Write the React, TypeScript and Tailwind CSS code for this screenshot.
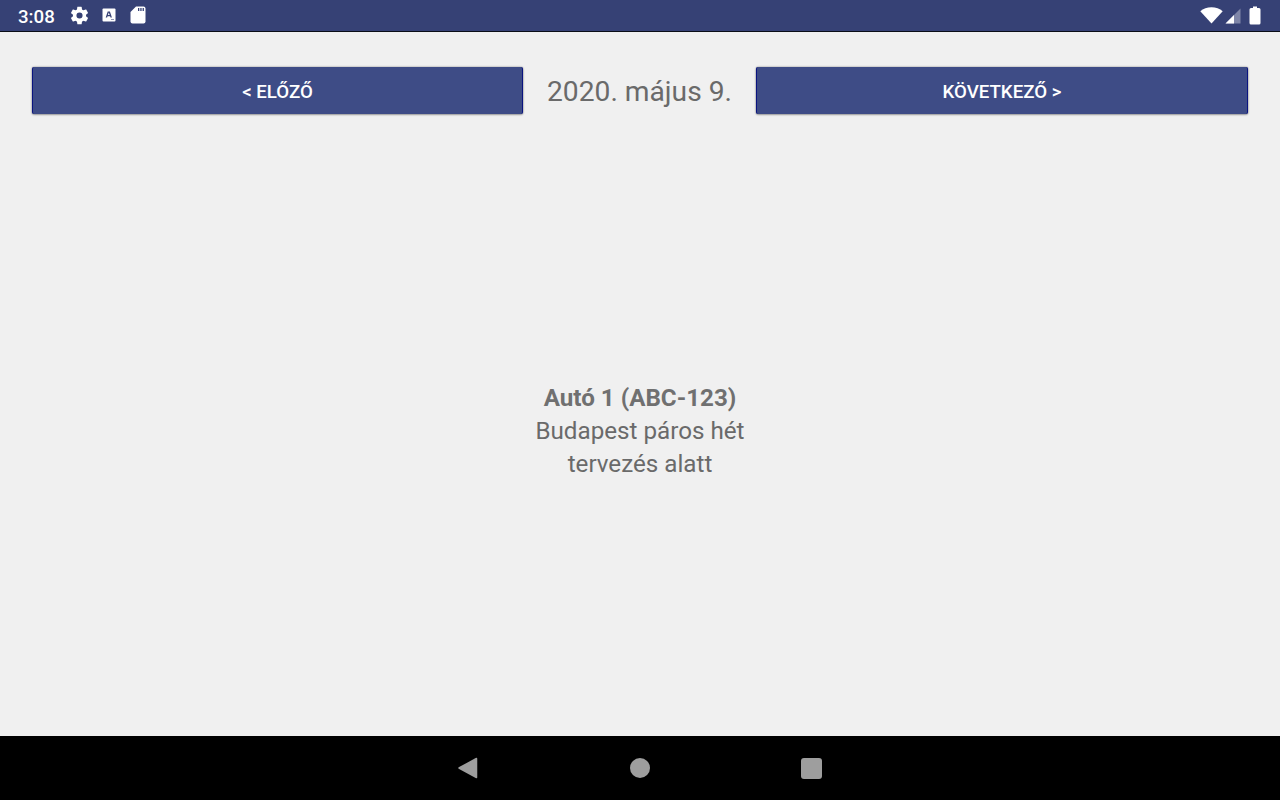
const font = { fontFamily: "Roboto, sans-serif" };

function StatusBar() {
  return (
    <div className="h-8 shrink-0 bg-[#364175] border-b border-black/80 flex items-center justify-between pl-[18px] pr-[19px] text-white">
      <div className="flex items-center">
        <span className="text-[18.67px] leading-none font-medium pt-[3px]">3:08</span>
        {/* settings */}
        <svg className="ml-[14px]" width="21" height="21" viewBox="0 0 24 24" fill="#fff">
          <path d="M19.43 12.98c.04-.32.07-.64.07-.98s-.03-.66-.07-.98l2.11-1.65c.19-.15.24-.42.12-.64l-2-3.46c-.12-.22-.39-.3-.61-.22l-2.49 1c-.52-.4-1.08-.73-1.69-.98l-.38-2.65A.49.49 0 0 0 14 2h-4c-.25 0-.46.18-.49.42l-.38 2.65c-.61.25-1.17.59-1.69.98l-2.49-1c-.23-.09-.49 0-.61.22l-2 3.46c-.13.22-.07.49.12.64l2.11 1.65c-.04.32-.07.65-.07.98s.03.66.07.98l-2.11 1.65c-.19.15-.24.42-.12.64l2 3.46c.12.22.39.3.61.22l2.49-1c.52.4 1.08.73 1.69.98l.38 2.65c.03.24.24.42.49.42h4c.25 0 .46-.18.49-.42l.38-2.65c.61-.25 1.17-.59 1.69-.98l2.49 1c.23.09.49 0 .61-.22l2-3.46c.12-.22.07-.49-.12-.64l-2.11-1.65zM12 15.5a3.5 3.5 0 1 1 0-7 3.5 3.5 0 0 1 0 7z" />
        </svg>
        {/* keyboard A notification */}
        <svg className="ml-[12px]" width="14" height="14" viewBox="0 0 14 14">
          <rect x="0.5" y="0.5" width="13" height="13" rx="1" fill="#fff" />
          <path d="M5.7 3.5h2.2l2 6h-1.4l-.4-1.3H5.5l-.4 1.3H3.7zM5.9 7.1h1.8L6.8 4.6z" fill="#364175" />
          <rect x="9" y="11" width="3" height="1" fill="#8f96b5" />
        </svg>
        {/* sd card */}
        <svg className="ml-[14px]" width="16" height="18" viewBox="0 0 16 18">
          <path d="M6 0.5H13.5a2 2 0 0 1 2 2v13a2 2 0 0 1-2 2h-11a2 2 0 0 1-2-2V6z" fill="#fff" />
          <rect x="8" y="2" width="1.3" height="3" fill="#364175" />
          <rect x="10.3" y="2" width="1.3" height="3" fill="#364175" />
          <rect x="12.6" y="2" width="1.3" height="3" fill="#364175" />
        </svg>
      </div>
      <div className="flex items-center">
        {/* wifi */}
        <svg width="23" height="17" viewBox="0 0 23 17">
          <path d="M0.3 4.300C3.200 1.800 7.200 0.300 11.500 0.300s8.300 1.500 11.200 4L11.500 16.500z" fill="#fff" />
        </svg>
        {/* signal */}
        <svg className="ml-[2px]" width="16" height="16" viewBox="0 0 16 16">
          <path d="M15.500 0.500V15.500H0.500z" fill="#7f86a8" />
          <path d="M9 7V15.500H0.500z" fill="#fff" />
        </svg>
        {/* battery */}
        <svg className="ml-[8px]" width="12" height="19" viewBox="0 0 12 19">
          <path d="M4 0.500h4v1.500h2a1.500 1.500 0 0 1 1.500 1.500v13.500a1.500 1.500 0 0 1-1.500 1.500H2a1.500 1.500 0 0 1-1.500-1.500V3.500A1.500 1.500 0 0 1 2 2h2z" fill="#fff" />
        </svg>
      </div>
    </div>
  );
}

function NavButton({ label, className }: { label: string; className: string }) {
  return (
    <button className={`${className} h-[47px] pt-[3px] bg-[#3e4c86] border-x border-[#0a1480] rounded-[2px] text-white text-[18.67px] font-medium shadow-[0_0_2px_rgba(0,0,0,0.45),0_1px_2px_rgba(0,0,0,0.25)]`}>
      {label}
    </button>
  );
}

export default function App() {
  return (
    <div className="w-[1280px] h-[800px] flex flex-col bg-[#f0f0f0] overflow-hidden" style={font}>
      <StatusBar />

      {/* date pager */}
      <div className="flex items-center px-8 pt-[35px]">
        <NavButton label="< ELŐZŐ" className="w-[491px]" />
        <div className="w-[233px] pt-[3px] text-center text-[28.2px] text-[#6a6a6a] leading-none">2020. május 9.</div>
        <NavButton label="KÖVETKEZŐ >" className="flex-1" />
      </div>

      {/* content */}
      <div className="flex-1 flex flex-col items-center justify-center pt-[13px] text-[24.2px] leading-[33px] text-[#6a6a6a] text-center">
        <div className="font-bold text-[#707070]">Autó 1 (ABC-123)</div>
        <div>Budapest páros hét</div>
        <div>tervezés alatt</div>
      </div>

      {/* android nav */}
      <div className="h-16 shrink-0 bg-black flex items-center justify-center">
        <svg width="20" height="22" viewBox="0 0 20 22">
          <path d="M18.500 1.500V20.500L1 11z" fill="#9e9e9e" stroke="#9e9e9e" strokeWidth="1.500" strokeLinejoin="round" />
        </svg>
        <div className="w-5 h-5 rounded-full bg-[#9e9e9e] ml-[152px]" />
        <div className="w-[21px] h-[21px] rounded-[3px] bg-[#9e9e9e] ml-[151px]" />
      </div>
    </div>
  );
}
